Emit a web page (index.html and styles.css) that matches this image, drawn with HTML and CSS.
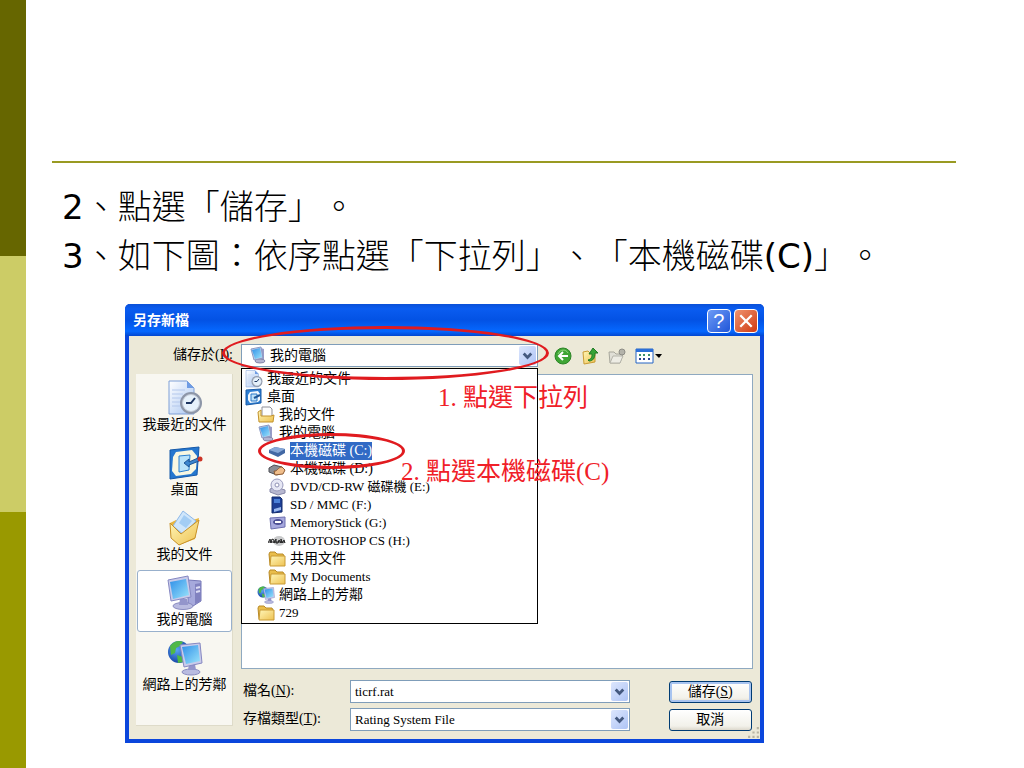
FILE: index.html
```html
<!DOCTYPE html>
<html lang="zh-Hant">
  <head>
    <meta charset="UTF-8" />
    <meta name="viewport" content="width=device-width, initial-scale=1.0" />
    <title>另存新檔</title>
    <link rel="stylesheet" href="styles.css">
  </head>
  <body>
    <svg class="defs" aria-hidden="true">
      <defs>
        <linearGradient id="screen" x1="0" y1="0" x2="1" y2="1">
          <stop offset="0" stop-color="#2f8fe8" />
          <stop offset="1" stop-color="#9be4fb" />
        </linearGradient>
        <linearGradient id="fold" x1="0" y1="0" x2="1" y2="1">
          <stop offset="0" stop-color="#fff6b8" />
          <stop offset="1" stop-color="#eec252" />
        </linearGradient>
        <linearGradient id="sheet" x1="0" y1="0" x2="1" y2="1">
          <stop offset="0" stop-color="#ffffff" />
          <stop offset="1" stop-color="#a9c6f2" />
        </linearGradient>
        <radialGradient id="globe" cx="0.4" cy="0.4" r="0.6">
          <stop offset="0" stop-color="#5aa6f5" />
          <stop offset="1" stop-color="#1746a8" />
        </radialGradient>
      </defs>
      <symbol id="recent" viewBox="0 0 36 36">
        <path d="M2 1h18l7 7v26H2z" fill="url(#sheet)" stroke="#7f9fd6" />
        <path d="M20 1v7h7z" fill="#6f9ce4" />
        <path d="M5 10h13M5 14h11M5 18h9M5 22h8M5 26h8" stroke="#b4c8ec" />
        <circle cx="24" cy="23" r="11" fill="#8d96a8" />
        <circle cx="24" cy="23" r="8.500" fill="#e6f1fb" stroke="#c3cad6" />
        <path d="M28 18l-4 5h-5" fill="none" stroke="#1d3560" stroke-width="2" />
      </symbol>
      <symbol id="desktop" viewBox="0 0 36 36">
        <path d="M3 5l29-3-2 28-27 4z" fill="#2577cf" stroke="#1558a8" />
        <path d="M9 7l16-2 5 6-1 13-5 5-15 2-4-5 1-14z" fill="#f8f7e2" />
        <path d="M12 11l11-1-1 15-10 2z" fill="#b9e2fa" stroke="#2a7fd0" />
        <path d="M17 18l5-4v3l9-4 1 3-10 4v2z" fill="#3c86cf" stroke="#1d5596" />
        <circle cx="33" cy="14" r="2.500" fill="#cc3326" />
      </symbol>
      <symbol id="desktop-small" viewBox="0 0 18 18">
        <path d="M1 2l15-1v14L1 17z" fill="#2f7fd2" stroke="#1a5ca8" />
        <path d="M5 4l8-1 2 3v6l-2 2-8 1-2-3V7z" fill="#f3f8fc" />
        <path d="M6 6h6v7H6z" fill="#bfe2f8" stroke="#2a78c8" />
        <path d="M9 10l6-3" stroke="#1d5596" stroke-width="2" />
      </symbol>
      <symbol id="mydocs" viewBox="0 0 36 36">
        <path d="M3 13l6-3 5 4 18-6-4 21-16 6-8-7z" fill="#e8b63e" />
        <path d="M16 1l13 10-12 14-11-9z" fill="#cfe6fb" stroke="#8eb8e8" />
        <path d="M17 5l8 6-6 7-7-5z" fill="#a3cdf4" />
        <path d="M3 13l11 11 18-14-4 18-16 7-8-7z" fill="url(#fold)" stroke="#c8922b" />
      </symbol>
      <symbol id="computer" viewBox="0 0 36 36">
        <path d="M21 5l13 1v20l-8 5-5-3z" fill="#a6a9dc" stroke="#7678b8" />
        <path d="M28 9l6-1v18l-6 3z" fill="#8182c0" />
        <path d="M29 13l4-1M29 17l4-1" stroke="#dcdcf4" stroke-width="2" />
        <ellipse cx="16" cy="31" rx="10" ry="3.500" fill="#b9bbe0" stroke="#8a8cc0" />
        <path d="M13 24h7l1 6h-9z" fill="#9395cb" />
        <path d="M1 5l20-4 3 21-20 4z" fill="#c9cbea" stroke="#8688c2" />
        <path d="M3 7l16-3 3 16-16 4z" fill="url(#screen)" />
      </symbol>
      <symbol id="computer-small" viewBox="0 0 18 18">
        <path d="M12 2l3 1v11l-3 2z" fill="#9a9cc8" />
        <ellipse cx="11" cy="15" rx="5" ry="2" fill="#b3b4d2" stroke="#8586a8" />
        <path d="M2 3l10-2 2 11-9 2z" fill="#c3cbe6" stroke="#8b9ac4" />
        <path d="M3 4l8-2 2 9-7 2z" fill="url(#screen)" />
      </symbol>
      <symbol id="network" viewBox="0 0 36 36">
        <circle cx="12" cy="12" r="11" fill="url(#globe)" />
        <path d="M3 6c4-5 9-6 13-4l-3 4-4 2-1 5-4 2zM10 15l6 2v5l-5 1z" fill="#4fb848" />
        <ellipse cx="24" cy="32" rx="9" ry="3" fill="#b9bbe0" stroke="#8a8cc0" />
        <path d="M22 24h6l1 6h-8z" fill="#9395cb" />
        <path d="M13 5l20-2 2 20-18 4z" fill="#c9cbea" stroke="#8688c2" />
        <path d="M15 7l16-2 2 16-14 3z" fill="url(#screen)" />
      </symbol>
      <symbol id="folder" viewBox="0 0 18 18">
        <path d="M1 4l1-2h5l2 2h6l1 2v9H2z" fill="#e9bd4b" stroke="#b98a26" />
        <path d="M3 6h14v10H2z" fill="url(#fold)" stroke="#c99a34" />
      </symbol>
      <symbol id="docfolder" viewBox="0 0 18 18">
        <path d="M5 1h8l2 2v9H5z" fill="#fdfdfd" stroke="#8f8f98" />
        <path d="M1 6l3-2v6h10l3-1-1 7H2z" fill="url(#fold)" stroke="#c2922c" />
      </symbol>
      <symbol id="disk" viewBox="0 0 18 18">
        <path d="M1 8l6-3 10 2v4l-7 4-9-4z" fill="#4268a4" />
        <path d="M1 8l6-3 10 2-7 4z" fill="#86a8d8" />
      </symbol>
      <symbol id="diskd" viewBox="0 0 18 18">
        <path d="M1 8l5-3 8 2v5l-5 3-8-3z" fill="#8b8d94" stroke="#4d4f55" />
        <path d="M6 11c3 1 4-4 8-4l3 3-2 4-8 1z" fill="#f0be8b" stroke="#8c5a32" />
      </symbol>
      <symbol id="dvd" viewBox="0 0 18 18">
        <path d="M2 11l5-2 10 3v3l-7 2-8-3z" fill="#b7b8d0" stroke="#8687a8" />
        <circle cx="9" cy="7" r="6" fill="#e6e7f4" stroke="#9a9bbd" />
        <circle cx="9" cy="7" r="2" fill="#ffffff" stroke="#8f90b4" />
      </symbol>
      <symbol id="sd" viewBox="0 0 18 18">
        <path d="M4 1h8l2 2v13l-10 1z" fill="#1d3f96" stroke="#142c6c" />
        <path d="M6 3h6v4H6z" fill="#4a80d8" />
        <path d="M6 13l7-2v3l-7 2z" fill="#9ab8ee" />
      </symbol>
      <symbol id="stick" viewBox="0 0 18 18">
        <path d="M2 4l15-1v10l-14 2z" fill="#a7a9de" stroke="#6d6fb0" />
        <ellipse cx="10" cy="8" rx="5" ry="3" fill="#4d4f94" />
        <path d="M7 8h6" stroke="#ffffff" stroke-width="2" />
      </symbol>
      <symbol id="photoshop" viewBox="0 0 18 18">
        <ellipse cx="11" cy="9" rx="6" ry="5" fill="#c9cacb" />
        <path d="M0 11l2-4 1 4 1-4 2 1v3l2-4v4h2l1-3 2 3V7l1 4 2-3 1 3M1 10h16" fill="none" stroke="#222222" />
      </symbol>
      <symbol id="chevron" viewBox="0 0 18 20">
        <path d="M5 8l4 4 4-4" fill="none" stroke="#44597f" stroke-width="3" />
      </symbol>
    </svg>

    <div class="stripe">
      <span></span>
      <span></span>
      <span></span>
    </div>

    <main class="slide">
      <div class="heading"></div>
      <div class="steps">
        <p><span>2</span>、點選「儲存」。</p>
        <p><span>3</span>、如下圖：依序點選「下拉列」、「本機磁碟<span>(C)</span>」。</p>
      </div>

      <section class="dialog">
        <div class="titlebar">
          <h2>另存新檔</h2>
          <button class="help" aria-label="說明">?</button>
          <button class="close" aria-label="關閉">
            <svg viewBox="0 0 14 14"><path d="M2 2l10 10M12 2L2 12" stroke="#ffffff" stroke-width="2" /></svg>
          </button>
        </div>

        <div class="content">
          <div class="lookin">
            <label for="lookin">儲存於(<u>I</u>):</label>
            <div class="combo with-icon">
              <svg class="lead"><use href="#computer-small" /></svg>
              <select id="lookin"><option>我的電腦</option></select>
              <svg class="arrow"><use href="#chevron" /></svg>
              <ul class="popup">
                <li><svg><use href="#recent" /></svg>我最近的文件</li>
                <li><svg><use href="#desktop-small" /></svg>桌面</li>
                <li class="in1"><svg><use href="#docfolder" /></svg>我的文件</li>
                <li class="in1"><svg><use href="#computer-small" /></svg>我的電腦</li>
                <li class="in2 active"><svg><use href="#disk" /></svg><span>本機磁碟 (C:)</span></li>
                <li class="in2"><svg><use href="#diskd" /></svg>本機磁碟 (D:)</li>
                <li class="in2 latin"><svg><use href="#dvd" /></svg>DVD/CD-RW 磁碟機 (E:)</li>
                <li class="in2 latin"><svg><use href="#sd" /></svg>SD / MMC (F:)</li>
                <li class="in2 latin"><svg><use href="#stick" /></svg>MemoryStick (G:)</li>
                <li class="in2 latin"><svg><use href="#photoshop" /></svg>PHOTOSHOP CS (H:)</li>
                <li class="in2"><svg><use href="#folder" /></svg>共用文件</li>
                <li class="in2 latin"><svg><use href="#folder" /></svg>My Documents</li>
                <li class="in1"><svg><use href="#network" /></svg>網路上的芳鄰</li>
                <li class="in1 latin"><svg><use href="#folder" /></svg>729</li>
              </ul>
              <div class="ring ring-combo"></div>
              <div class="ring ring-disk"></div>
              <p class="note note-1">1. 點選下拉列</p>
              <p class="note note-2">2. 點選本機磁碟(C)</p>
            </div>
            <div class="tools">
              <button aria-label="上一頁">
                <svg viewBox="0 0 18 18">
                  <circle cx="9" cy="9" r="8" fill="#3fa535" stroke="#2b8526" />
                  <path d="M4 7c2-5 8-5 10-1" fill="none" stroke="#8fd67e" />
                  <path d="M14 9H5M9 5L5 9l4 4" fill="none" stroke="#ffffff" stroke-width="2" />
                </svg>
              </button>
              <button aria-label="上一層">
                <svg viewBox="0 0 18 18">
                  <path d="M2 5l5-1 2 2 5-1v10l-11 2z" fill="url(#fold)" stroke="#c99c34" />
                  <path d="M7 13c4-1 4-4 4-6H8l4-6 5 5h-3c0 5-2 8-6 8z" fill="#37a336" stroke="#1f7a26" />
                </svg>
              </button>
              <button aria-label="新資料夾">
                <svg viewBox="0 0 18 18">
                  <path d="M1 5h5l2 2h7l-3 9H2z" fill="#e0dfd6" stroke="#a8a79c" />
                  <path d="M2 16l3-7h10l-3 7z" fill="#edece4" stroke="#b5b4aa" />
                  <circle cx="14" cy="5" r="3" fill="#b4b3aa" stroke="#8e8d86" />
                </svg>
              </button>
              <button class="views" aria-label="檢視">
                <svg viewBox="0 0 28 18">
                  <path d="M1 2h17v14H1z" fill="#ffffff" stroke="#2465c4" />
                  <path d="M1 2h17v3H1z" fill="#2c6fd8" />
                  <path d="M4 8h2M8 8h2M13 8h2" stroke="#3c8f6c" stroke-width="2" />
                  <path d="M4 12h2M8 12h2M13 12h2" stroke="#2a3f90" stroke-width="2" />
                  <path d="M20 7h7l-3 4z" fill="#000000" />
                </svg>
              </button>
            </div>
          </div>

          <nav class="places">
            <button><svg><use href="#recent" /></svg>我最近的文件</button>
            <button><svg><use href="#desktop" /></svg>桌面</button>
            <button><svg><use href="#mydocs" /></svg>我的文件</button>
            <button class="current"><svg><use href="#computer" /></svg>我的電腦</button>
            <button><svg><use href="#network" /></svg>網路上的芳鄰</button>
          </nav>

          <div class="right">
            <div class="files"></div>
            <form class="fields">
              <label for="name">檔名(<u>N</u>):</label>
              <div class="combo">
                <input id="name" type="text" value="ticrf.rat" />
                <svg class="arrow"><use href="#chevron" /></svg>
              </div>
              <button class="btn default" type="button">儲存(<u>S</u>)</button>
              <label for="type">存檔類型(<u>T</u>):</label>
              <div class="combo">
                <select id="type"><option>Rating System File</option></select>
                <svg class="arrow"><use href="#chevron" /></svg>
              </div>
              <button class="btn" type="button">取消</button>
            </form>
          </div>
          <svg class="grip" viewBox="0 0 12 12">
            <path d="M9 1h2v2H9zM9 5h2v2H9zM5 5h2v2H5zM9 9h2v2H9zM5 9h2v2H5zM1 9h2v2H1z" fill="#b8b4a2" />
          </svg>
        </div>
      </section>
    </main>
  </body>
</html>
```
FILE: styles.css
```css
* {
  margin: 0;
  padding: 0;
  box-sizing: border-box;
}
body {
  min-height: 100vh;
  display: flex;
  background-color: white;
  color: black;
  font-family: "Liberation Serif", "Noto Sans CJK TC", serif;
  font-size: 14px;
}
button,
input,
select {
  font: inherit;
  color: inherit;
}
.defs {
  position: absolute;
  width: 0;
  height: 0;
}

/* left colour stripe */
.stripe {
  width: 26px;
  display: flex;
  flex-direction: column;
}
.stripe span {
  flex: 1;
  background-color: #666600;
}
.stripe span:nth-child(2) {
  background-color: #cccc66;
}
.stripe span:nth-child(3) {
  background-color: #999900;
}

.slide {
  flex: 1;
}
.heading {
  height: 163px;
  margin: 0 68px 0 26px;
  border-bottom: 2px solid #999a22;
}
.steps {
  padding: 20px 36px 0;
  font-family: "DejaVu Sans", "Noto Sans CJK TC", sans-serif;
  font-size: 34px;
  font-weight: 300;
  line-height: 49px;
  text-spacing-trim: space-all;
}
.steps span {
  font-weight: 400;
}

/* save dialog */
.dialog {
  width: 64%;
  margin: 23px 0 24px 99px;
  border: 4px solid #0b46dc;
  border-top: none;
  border-radius: 5px 5px 0 0;
  background-color: #ece9d8;
}
.titlebar {
  height: 32px;
  margin: 0 -4px;
  padding: 2px 6px 0 8px;
  display: flex;
  align-items: center;
  gap: 3px;
  border-radius: 5px 5px 0 0;
  background: linear-gradient(#0a50d8, #0a5cf0 15%, #0352e4 50%, #0568ff 85%, #0347d0);
}
.titlebar h2 {
  flex: 1;
  color: white;
  font-size: 14px;
  line-height: 18px;
}
.titlebar button {
  width: 24px;
  height: 24px;
  display: flex;
  align-items: center;
  justify-content: center;
  border: 1px solid white;
  border-radius: 4px;
  color: white;
  font-family: "Liberation Sans", sans-serif;
  font-size: 20px;
}
.titlebar svg {
  width: 16px;
  height: 16px;
}
.help {
  background: linear-gradient(135deg, #6d9bf6, #1f55d8);
}
.close {
  background: linear-gradient(135deg, #f0936f, #cf3a12);
}
.content {
  position: relative;
  padding: 8px 7px 8px 7px;
  display: grid;
  grid-template-columns: 97px 1fr;
  gap: 7px 8px;
}
.content label {
  padding-bottom: 2px;
  line-height: 18px;
}
.lookin {
  grid-column: 1 / 3;
  display: grid;
  grid-template-columns: 97px 297px 1fr;
  column-gap: 8px;
  align-items: center;
}
.lookin label {
  text-align: right;
}

/* combo boxes */
.combo {
  position: relative;
  height: 23px;
}
.combo input,
.combo select {
  display: block;
  width: 100%;
  height: 23px;
  padding: 0 20px 0 4px;
  border: 1px solid #7f9db9;
  background-color: white;
  appearance: none;
  font-size: 13px;
}
.combo.with-icon select {
  padding-left: 28px;
  font-size: 14px;
}
.arrow {
  position: absolute;
  top: 2px;
  right: 2px;
  width: 17px;
  height: 19px;
  border-radius: 2px;
  background: linear-gradient(135deg, #dce6fd, #aec4f5);
  pointer-events: none;
}
.lead {
  position: absolute;
  top: 2px;
  left: 8px;
  width: 18px;
  height: 18px;
}
.popup {
  position: absolute;
  z-index: 1;
  top: 24px;
  left: 0;
  width: 100%;
  padding: 1px 0 1px 3px;
  border: 1px solid black;
  background-color: white;
  list-style: none;
}
.popup li {
  height: 18px;
  display: flex;
  align-items: center;
  gap: 4px;
  line-height: 18px;
}
.popup svg {
  width: 18px;
  height: 18px;
}
.popup .latin {
  font-size: 13px;
}
.popup .in1 {
  padding-left: 12px;
}
.popup .in2 {
  padding-left: 23px;
}
.popup .active span {
  background-color: #316ac5;
  color: white;
}

/* red marks over the dialog */
.ring {
  position: absolute;
  z-index: 2;
  border: 3px solid #e01b1f;
  border-radius: 50%;
  pointer-events: none;
}
.ring-combo {
  top: -18px;
  left: -19px;
  width: 327px;
  height: 54px;
}
.ring-disk {
  top: 89px;
  left: 17px;
  width: 147px;
  height: 36px;
}
.note {
  position: absolute;
  z-index: 2;
  color: #f02028;
  font-size: 25px;
  line-height: 30px;
  white-space: nowrap;
}
.note-1 {
  top: 39px;
  left: 197px;
}
.note-2 {
  top: 113px;
  left: 160px;
}

.tools {
  padding-left: 8px;
  display: flex;
  gap: 9px;
}
.tools button {
  width: 18px;
  height: 18px;
  border: none;
  background: none;
}
.tools svg {
  display: block;
  width: 100%;
  height: 18px;
}
.tools .views {
  width: 28px;
}

.places {
  margin-bottom: 5px;
  padding: 1px 0 1px 1px;
  display: flex;
  flex-direction: column;
  gap: 3px;
  border: 1px solid #dedbc9;
  border-top: none;
  border-left: none;
  background-color: #f8f7f1;
}
.places button {
  height: 62px;
  padding-top: 4px;
  display: flex;
  flex-direction: column;
  align-items: center;
  border: 1px solid transparent;
  background: none;
  line-height: 18px;
  white-space: nowrap;
}
.places svg {
  width: 36px;
  height: 36px;
}
.places .current {
  border-color: #98b0cc;
  border-radius: 3px;
  background-color: white;
}

.right {
  display: flex;
  flex-direction: column;
  gap: 11px;
}
.files {
  min-height: 295px;
  flex: 1;
  border: 1px solid #8fa9c0;
  background-color: white;
}
.fields {
  display: grid;
  grid-template-columns: 107px 1fr 83px;
  row-gap: 5px;
  align-items: center;
  padding: 0 1px 0 2px;
}
.fields .combo {
  margin-right: 39px;
}
.btn {
  height: 22px;
  border: 1px solid #003c74;
  border-radius: 3px;
  background: linear-gradient(white, #f2f1ea 80%, #dcd8cc);
  line-height: 18px;
}
.btn.default {
  box-shadow: inset 0 0 0 2px #a8c4f0;
}
.grip {
  position: absolute;
  right: 0;
  bottom: 0;
  width: 13px;
  height: 13px;
}
```
